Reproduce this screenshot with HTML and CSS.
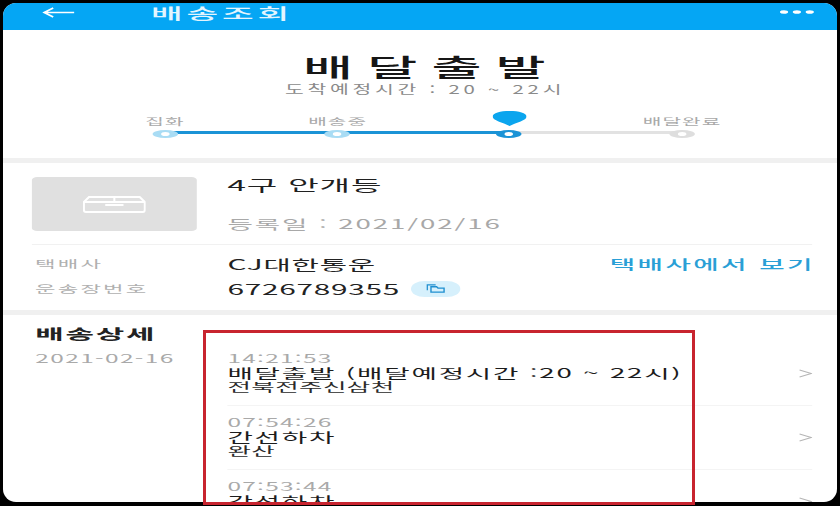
FILE: index.html
```html
<!DOCTYPE html>
<html lang="ko">
<head>
<meta charset="utf-8">
<title>배송조회</title>
<link rel="stylesheet" href="styles.css">
</head>
<body>
<div class="device">
  <div class="screen">
    <div class="stage">
      <header class="topbar">
        <svg class="back" viewBox="0 0 32 12" preserveAspectRatio="none" aria-hidden="true"><path d="M32 6H2M11 1 2 6l9 5" fill="none" stroke="#fff" stroke-width="1.800"/></svg>
        <h1 class="topbar-title">배송조회</h1>
        <svg class="more" viewBox="0 0 33 4" preserveAspectRatio="none" aria-hidden="true"><ellipse cx="4" cy="2" rx="4" ry="1.800" fill="#fff"/><ellipse cx="16.500" cy="2" rx="4" ry="1.800" fill="#fff"/><ellipse cx="29" cy="2" rx="4" ry="1.800" fill="#fff"/></svg>
      </header>

      <section class="status">
        <h2 class="status-title">배달출발</h2>
        <p class="status-sub">도착예정시간 : 20 ~ 22시</p>
        <div class="steps">
          <div class="track"><span class="track-done"></span></div>
          <div class="step"><span class="step-label">집화</span><span class="dot done"></span></div>
          <div class="step"><span class="step-label">배송중</span><span class="dot done"></span></div>
          <div class="step">
            <svg class="pin" viewBox="0 0 20 15" preserveAspectRatio="none" aria-hidden="true"><path d="M10 15C6 11.500 0 9.500 0 5.500 0 2 4.500 0 10 0s10 2 10 5.500c0 4-6 6-10 9.500z" fill="#0ba5ee"/></svg>
            <span class="dot current"></span>
          </div>
          <div class="step"><span class="step-label">배달완료</span><span class="dot todo"></span></div>
        </div>
      </section>

      <section class="info">
        <div class="product">
          <div class="thumb">
            <svg class="box" viewBox="0 0 62 17" preserveAspectRatio="none" aria-hidden="true"><path d="M1 6 6 1h50l5 5v8a2 2 0 0 1-2 2H3a2 2 0 0 1-2-2zM1 6h60M31 1v5M22 9h18" fill="none" stroke="#fff" stroke-width="2"/></svg>
          </div>
          <div class="product-text">
            <div class="product-name">4구 안개등</div>
            <div class="product-date">등록일 : 2021/02/16</div>
          </div>
        </div>
        <div class="meta">
          <div class="meta-row">
            <span class="meta-label">택배사</span>
            <span class="meta-value">CJ대한통운</span>
            <span class="meta-link">택배사에서 보기</span>
          </div>
          <div class="meta-row">
            <span class="meta-label">운송장번호</span>
            <span class="meta-value">6726789355</span>
            <span class="copy">
              <svg class="copy-icon" viewBox="0 0 20 10" preserveAspectRatio="none" aria-hidden="true"><path d="M1 7V1h9M5 9V3h6l1.500 1.500H19V9z" fill="none" stroke="#1f8fd0" stroke-width="1.500"/></svg>
            </span>
          </div>
        </div>
      </section>

      <section class="detail">
        <div class="detail-side">
          <h3 class="detail-title">배송상세</h3>
          <div class="detail-date">2021-02-16</div>
        </div>
        <ul class="events">
          <li class="event">
            <div class="event-text">
              <div class="event-time">14:21:53</div>
              <div class="event-main">배달출발 (배달예정시간 :20 ~ 22시)</div>
              <div class="event-sub">전북전주신삼천</div>
            </div>
            <svg class="chev" viewBox="0 0 14 10" preserveAspectRatio="none" aria-hidden="true"><path d="M1 1l12 4-12 4" fill="none" stroke="#b5b5b5" stroke-width="1.200"/></svg>
          </li>
          <li class="event">
            <div class="event-text">
              <div class="event-time">07:54:26</div>
              <div class="event-main">간선하차</div>
              <div class="event-sub">완산</div>
            </div>
            <svg class="chev" viewBox="0 0 14 10" preserveAspectRatio="none" aria-hidden="true"><path d="M1 1l12 4-12 4" fill="none" stroke="#b5b5b5" stroke-width="1.200"/></svg>
          </li>
          <li class="event">
            <div class="event-text">
              <div class="event-time">07:53:44</div>
              <div class="event-main">간선하차</div>
              <div class="event-sub">완산</div>
            </div>
            <svg class="chev" viewBox="0 0 14 10" preserveAspectRatio="none" aria-hidden="true"><path d="M1 1l12 4-12 4" fill="none" stroke="#b5b5b5" stroke-width="1.200"/></svg>
          </li>
        </ul>
      </section>
    </div>
  </div>
  <div class="highlight"></div>
</div>
</body>
</html>
```

FILE: styles.css
```css
* { box-sizing: border-box; }
html, body { margin: 0; padding: 0; }
body { width: 840px; height: 506px; overflow: hidden; background: #000; }
h1, h2, h3, p, ul { margin: 0; padding: 0; list-style: none; font-weight: 400; }

.device {
  position: relative;
  width: 840px;
  height: 506px;
  background: #000;
  padding: 3px 3px 4px 3px;
}
.screen {
  width: 834px;
  height: 499px;
  background: #fff;
  border-radius: 13px;
  overflow: hidden;
}
/* the reference is a horizontally stretched capture: lay out at 1/1.7 of the width */
.stage {
  width: 490.6px;
  height: 499px;
  transform: scaleX(1.7);
  transform-origin: 0 0;
  font-family: "Noto Sans CJK KR", "Noto Sans", sans-serif;
  color: #1c1c1c;
  overflow: hidden;
}

.topbar {
  height: 27px;
  background: #05a6f4;
  display: flex;
  align-items: center;
  padding: 0 14px 0 23px;
  color: #fff;
}
.back { width: 19px; height: 11px; margin-top: -9px; flex: none; }
.topbar-title {
  margin-left: 45px;
  margin-top: -9px;
  font-size: 15px;
  line-height: 15px;
  font-weight: 500;
  letter-spacing: 1.700px;
  color: #e4f5fe;
  transform: scaleX(1.35);
  transform-origin: 0 50%;
}
.more { width: 20px; height: 4px; margin-left: auto; margin-top: -9px; }

.status {
  height: 133px;
  border-bottom: 5px solid #f0f0f0;
  padding-top: 20px;
  display: flex;
  flex-direction: column;
  align-items: center;
}
.status-title {
  font-size: 25px;
  line-height: 32px;
  font-weight: 500;
  letter-spacing: 6.500px;
  margin-left: 13.400px;
  color: #161616;
  transform: scaleX(1.28);
}
.status-sub {
  margin-top: -1px;
  margin-left: 6px;
  font-size: 12px;
  line-height: 16px;
  letter-spacing: 2.200px;
  color: #8a8a8a;
}
.steps {
  position: relative;
  width: 344px;
  margin-top: 9px;
  margin-left: 4px;
  height: 34px;
  display: flex;
  justify-content: space-between;
}
.track {
  position: absolute;
  left: 20px;
  right: 20px;
  top: 25px;
  height: 3px;
  background: #e2e2e2;
}
.track-done { display: block; width: 66.700%; height: 3px; background: #1b93d6; }
.step {
  position: relative;
  width: 40px;
  display: flex;
  flex-direction: column;
  align-items: center;
  justify-content: flex-end;
  height: 34px;
}
.step-label {
  font-size: 9.500px;
  line-height: 14px;
  letter-spacing: .5px;
  color: #a9a9a9;
  white-space: nowrap;
  margin-bottom: 2px;
  transform: scaleX(1.25);
}
.dot {
  display: block;
  width: 15px;
  height: 8px;
  border-radius: 50%;
  background: #fff;
  border-style: solid;
  border-width: 2.500px 5px;
  border-color: #a9dcf4;
  margin-bottom: 2px;
}
.dot.current { border-color: #1b93d6; }
.dot.todo { border-color: #dedede; }
.pin {
  width: 20px;
  height: 15px;
  margin-bottom: 4px;
}

.info {
  height: 152px;
  border-bottom: 5px solid #f0f0f0;
  padding: 14px 14.500px 0 17px;
}
.product { display: flex; height: 68px; border-bottom: 1px solid #f1f1f1; }
.thumb {
  width: 97px;
  height: 54px;
  background: #e0e0e0;
  border-radius: 3px;
  display: flex;
  align-items: center;
  justify-content: center;
  flex: none;
}
.box { width: 37px; height: 17px; }
.product-text { margin-left: 18px; }
.product-name {
  font-size: 15px;
  line-height: 20px;
  letter-spacing: .4px;
  color: #202020;
  margin-top: -2px;
  white-space: nowrap;
  transform: scaleX(1.3);
  transform-origin: 0 50%;
}
.product-date {
  font-size: 13px;
  line-height: 18px;
  letter-spacing: .9px;
  margin-top: 20px;
  color: #a8a8a8;
  white-space: nowrap;
  transform: scaleX(1.25);
  transform-origin: 0 50%;
}
.meta { padding-top: 6px; }
.meta-row { display: flex; align-items: center; height: 25px; }
.meta-label {
  width: 115px;
  padding-left: 1.500px;
  font-size: 10.500px;
  letter-spacing: 1px;
  color: #b0b0b0;
  flex: none;
  white-space: nowrap;
  transform: scaleX(1.25);
  transform-origin: 0 50%;
}
.meta-value {
  font-size: 14px;
  letter-spacing: .35px;
  color: #222;
  transform: scaleX(1.25);
  transform-origin: 0 50%;
}
.meta-link {
  margin-left: auto;
  margin-right: -1px;
  font-size: 13px;
  font-weight: 500;
  letter-spacing: 1.150px;
  color: #2a9fd6;
  white-space: nowrap;
  transform: scaleX(1.25);
  transform-origin: 100% 50%;
}
.copy {
  width: 29px;
  height: 16px;
  margin-left: 26.500px;
  border-radius: 8px;
  background: #d6f0fc;
  display: flex;
  align-items: center;
  justify-content: center;
}
.copy-icon { width: 11px; height: 9px; }

.detail {
  display: flex;
  padding: 9px 14.500px 0 19px;
}
.detail-side { width: 113px; flex: none; }
.detail-title {
  font-size: 14px;
  line-height: 18px;
  font-weight: 700;
  letter-spacing: .8px;
  color: #222;
  white-space: nowrap;
  transform: scaleX(1.3);
  transform-origin: 0 50%;
}
.detail-date {
  margin-top: 9px;
  font-size: 11.500px;
  line-height: 14px;
  letter-spacing: .65px;
  color: #a9a9a9;
  white-space: nowrap;
  transform: scaleX(1.25);
  transform-origin: 0 50%;
}
.events { flex: 1; padding-top: 18px; }
.event {
  display: flex;
  align-items: center;
  justify-content: space-between;
  height: 64px;
  border-bottom: 1px solid #f4f4f4;
}
.event-text {
  margin-top: -3px;
  transform: scaleX(1.25);
  transform-origin: 0 50%;
}
.event-time {
  font-size: 11.500px;
  line-height: 14px;
  letter-spacing: .6px;
  color: #a9a9a9;
}
.event-main {
  font-size: 13px;
  line-height: 15px;
  letter-spacing: .85px;
  color: #1c1c1c;
  white-space: nowrap;
}
.event-sub {
  font-size: 12px;
  line-height: 14px;
  letter-spacing: .2px;
  color: #2a2a2a;
}
.chev { width: 8px; height: 9px; margin-top: 0; flex: none; }

.highlight {
  position: absolute;
  left: 203px;
  top: 330px;
  width: 492px;
  height: 175px;
  border: 3px solid #c8242f;
  pointer-events: none;
}
```
